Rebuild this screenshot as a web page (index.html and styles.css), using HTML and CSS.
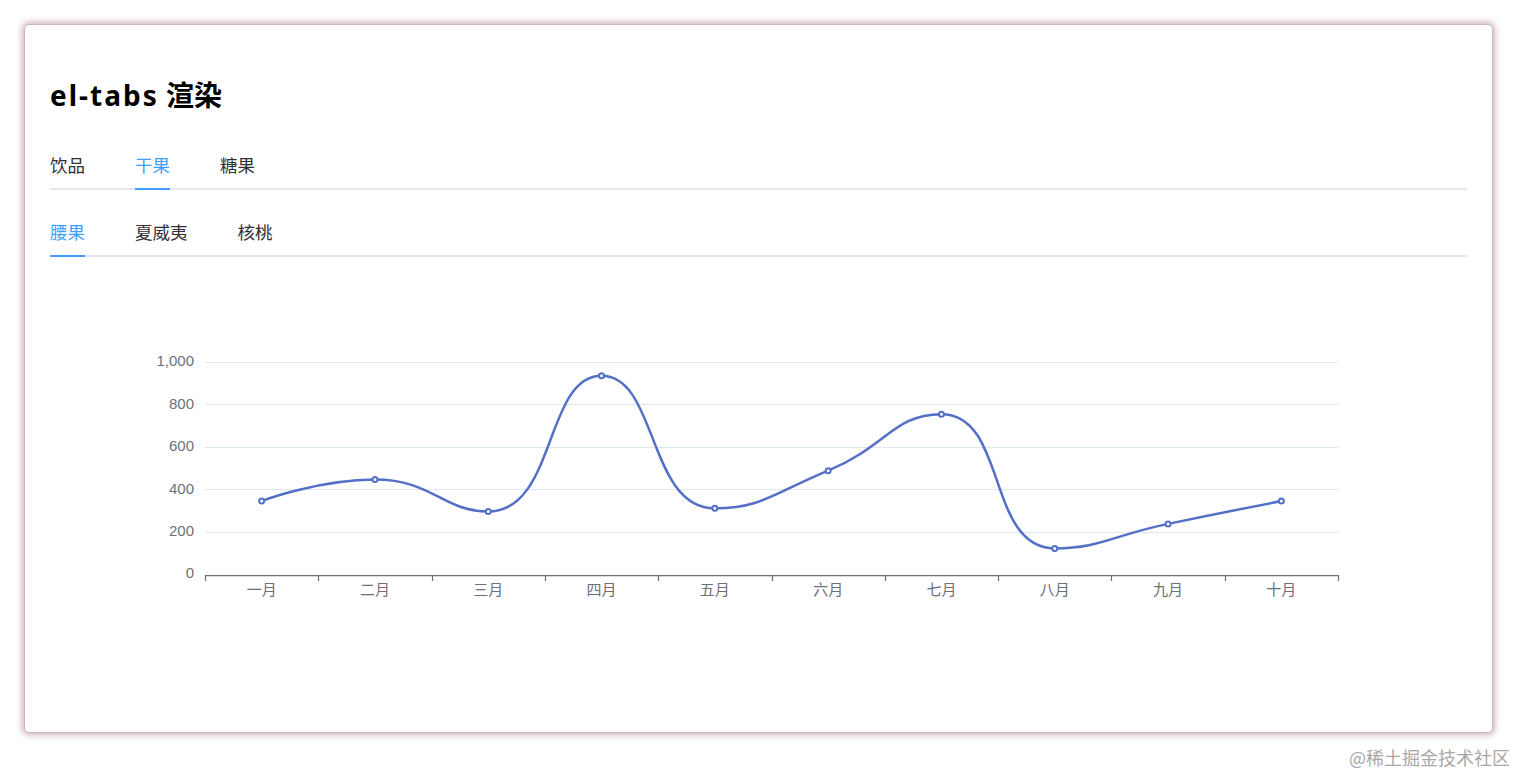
FILE: index.html
```html
<!DOCTYPE html>
<html lang="zh-CN">
<head>
<meta charset="utf-8">
<title>el-tabs 渲染</title>
<link rel="stylesheet" href="styles.css">
</head>
<body>
<div class="page">
  <div class="card">
    <h2 class="title"><span class="title-latin">el-tabs</span> 渲染</h2>
    <div class="tabs tabs-outer">
      <div class="tab">饮品</div>
      <div class="tab active">干果</div>
      <div class="tab">糖果</div>
    </div>
    <div class="tabs tabs-inner">
      <div class="tab active">腰果</div>
      <div class="tab">夏威夷</div>
      <div class="tab">核桃</div>
    </div>
    <svg class="chart" id="chart" width="1417" height="432" viewBox="50 275 1417 432" xmlns="http://www.w3.org/2000/svg">
      <g class="grid">
        <line x1="205" y1="362.5" x2="1338" y2="362.5"/>
        <line x1="205" y1="404.5" x2="1338" y2="404.5"/>
        <line x1="205" y1="447.5" x2="1338" y2="447.5"/>
        <line x1="205" y1="489.5" x2="1338" y2="489.5"/>
        <line x1="205" y1="532.5" x2="1338" y2="532.5"/>
      </g>
      <g class="ylabels">
        <text x="194" y="362">1,000</text>
        <text x="194" y="405">800</text>
        <text x="194" y="447">600</text>
        <text x="194" y="490">400</text>
        <text x="194" y="532">200</text>
        <text x="194" y="574">0</text>
      </g>
      <g class="axis" id="axis">
        <line x1="205" y1="575.5" x2="1338" y2="575.5"/>
      </g>
      <g class="xlabels" id="xlabels"></g>
      <path class="series" id="series" d=""/>
      <g class="symbols" id="symbols"></g>
    </svg>
  </div>
</div>
<div class="watermark">@稀土掘金技术社区</div>
<script src="script.js"></script>
</body>
</html>
```

FILE: styles.css
```css
html, body {
  margin: 0;
  padding: 0;
  background: #ffffff;
}

body {
  font-family: "Noto Sans", "Noto Sans CJK SC", sans-serif;
  color: #303133;
}

.page {
  padding: 24px;
}

.card {
  box-sizing: border-box;
  height: 709px;
  padding: 25px;
  background: #ffffff;
  border: 1px solid #cdb5ba;
  border-radius: 5px;
  box-shadow: 0 0 6px 2px rgba(180, 140, 150, 0.65);
}

.title {
  margin: 28px 0 28px;
  font-size: 28px;
  line-height: 34px;
  font-weight: 700;
  color: #000000;
}

.title-latin {
  letter-spacing: 2px;
}

.tabs {
  position: relative;
  display: flex;
  height: 50px;
}

.tabs::after {
  content: "";
  position: absolute;
  left: 0;
  right: 0;
  bottom: 0;
  height: 2.5px;
  background: #e4e7ed;
}

.tabs-outer {
  margin-bottom: 17px;
}

.tabs-inner {
  margin-bottom: 18px;
}

.tabs-inner::after {
  height: 2px;
}

.tab {
  position: relative;
  padding: 0 25px;
  height: 50px;
  line-height: 50px;
  font-size: 17.5px;
  font-family: "Noto Sans CJK SC", sans-serif;
  color: #303133;
  white-space: nowrap;
}

.tab:first-child {
  padding-left: 0;
}

.tab:last-child {
  padding-right: 0;
}

.tab.active {
  color: #409eff;
}

.tab.active::after {
  content: "";
  position: absolute;
  left: 25px;
  right: 25px;
  bottom: 0;
  height: 2.5px;
  background: #409eff;
  z-index: 1;
}

.tab.active:first-child::after {
  left: 0;
}

.tab.active:last-child::after {
  right: 0;
}

.chart {
  display: block;
}

.grid line {
  stroke: #e0e6f1;
  stroke-width: 1;
}

.axis line {
  stroke: #6e7079;
  stroke-width: 1.25;
}

.ylabels text {
  font-family: "Liberation Sans", "Noto Sans CJK SC", sans-serif;
  font-size: 15px;
  fill: #6e7079;
  text-anchor: end;
  dominant-baseline: middle;
}

.xlabels text {
  font-family: "Noto Sans CJK SC", sans-serif;
  font-size: 15px;
  fill: #6e7079;
  text-anchor: middle;
  dominant-baseline: middle;
}

.series {
  fill: none;
  stroke: #5470c6;
  stroke-width: 2.5;
  stroke-linejoin: bevel;
}

.symbols circle {
  fill: #ffffff;
  stroke: #5470c6;
  stroke-width: 2;
}

.watermark {
  position: absolute;
  right: 7px;
  top: 745px;
  font-family: "Noto Sans CJK SC", sans-serif;
  font-size: 18px;
  line-height: 24px;
  color: #a8a8a8;
}
```

FILE: script.js
```js
(function () {
  var NS = "http://www.w3.org/2000/svg";
  var months = ["一月", "二月", "三月", "四月", "五月", "六月", "七月", "八月", "九月", "十月"];
  var values = [347, 448, 298, 935, 313, 490, 755, 125, 240, 347];
  var left = 205, right = 1338, y0 = 575, y1000 = 362;
  var band = (right - left) / months.length;
  var scale = (y0 - y1000) / 1000;

  var axis = document.getElementById("axis");
  var xl = document.getElementById("xlabels");
  for (var k = 0; k <= months.length; k++) {
    var tx = Math.round(left + band * k) + 0.5;
    var t = document.createElementNS(NS, "line");
    t.setAttribute("x1", tx); t.setAttribute("x2", tx);
    t.setAttribute("y1", 575); t.setAttribute("y2", 581);
    axis.appendChild(t);
  }
  var pts = [];
  for (var i = 0; i < months.length; i++) {
    var cx = left + band * (i + 0.5);
    var lab = document.createElementNS(NS, "text");
    lab.setAttribute("x", cx);
    lab.setAttribute("y", 591);
    lab.textContent = months[i];
    xl.appendChild(lab);
    pts.push([cx, y0 - values[i] * scale]);
  }

  // ECharts-like smooth line (smooth = 0.5)
  var smooth = 0.5;
  var d = "";
  var cpx0, cpy0, prevX, prevY;
  var min = Math.min, max = Math.max;
  for (var j = 0; j < pts.length; j++) {
    var x = pts[j][0], y = pts[j][1];
    if (j === 0) {
      d += "M" + x.toFixed(2) + " " + y.toFixed(2);
      cpx0 = x; cpy0 = y;
    } else {
      var cpx1, cpy1, nextCpx0, nextCpy0;
      if (j === pts.length - 1) {
        cpx1 = x; cpy1 = y;
      } else {
        var nextX = pts[j + 1][0], nextY = pts[j + 1][1];
        var vx = nextX - prevX, vy = nextY - prevY;
        var dx0 = x - prevX, dx1 = nextX - x, dy0 = y - prevY, dy1 = nextY - y;
        var lenPrev = Math.sqrt(dx0 * dx0 + dy0 * dy0);
        var lenNext = Math.sqrt(dx1 * dx1 + dy1 * dy1);
        var ratio = lenNext / (lenNext + lenPrev);
        nextCpx0 = x + vx * smooth * ratio;
        nextCpy0 = y + vy * smooth * ratio;
        nextCpx0 = min(nextCpx0, max(nextX, x));
        nextCpy0 = min(nextCpy0, max(nextY, y));
        nextCpx0 = max(nextCpx0, min(nextX, x));
        nextCpy0 = max(nextCpy0, min(nextY, y));
        vx = nextCpx0 - x; vy = nextCpy0 - y;
        cpx1 = x - vx * lenPrev / lenNext;
        cpy1 = y - vy * lenPrev / lenNext;
        cpx1 = min(cpx1, max(prevX, x));
        cpy1 = min(cpy1, max(prevY, y));
        cpx1 = max(cpx1, min(prevX, x));
        cpy1 = max(cpy1, min(prevY, y));
        vx = x - cpx1; vy = y - cpy1;
        nextCpx0 = x + vx * lenNext / lenPrev;
        nextCpy0 = y + vy * lenNext / lenPrev;
      }
      d += " C" + cpx0.toFixed(2) + " " + cpy0.toFixed(2) + " " +
        cpx1.toFixed(2) + " " + cpy1.toFixed(2) + " " +
        x.toFixed(2) + " " + y.toFixed(2);
      cpx0 = nextCpx0; cpy0 = nextCpy0;
    }
    prevX = x; prevY = y;
  }
  document.getElementById("series").setAttribute("d", d);

  var sym = document.getElementById("symbols");
  for (var m = 0; m < pts.length; m++) {
    var c = document.createElementNS(NS, "circle");
    c.setAttribute("cx", pts[m][0]);
    c.setAttribute("cy", pts[m][1]);
    c.setAttribute("r", 2.5);
    sym.appendChild(c);
  }
})();
```
